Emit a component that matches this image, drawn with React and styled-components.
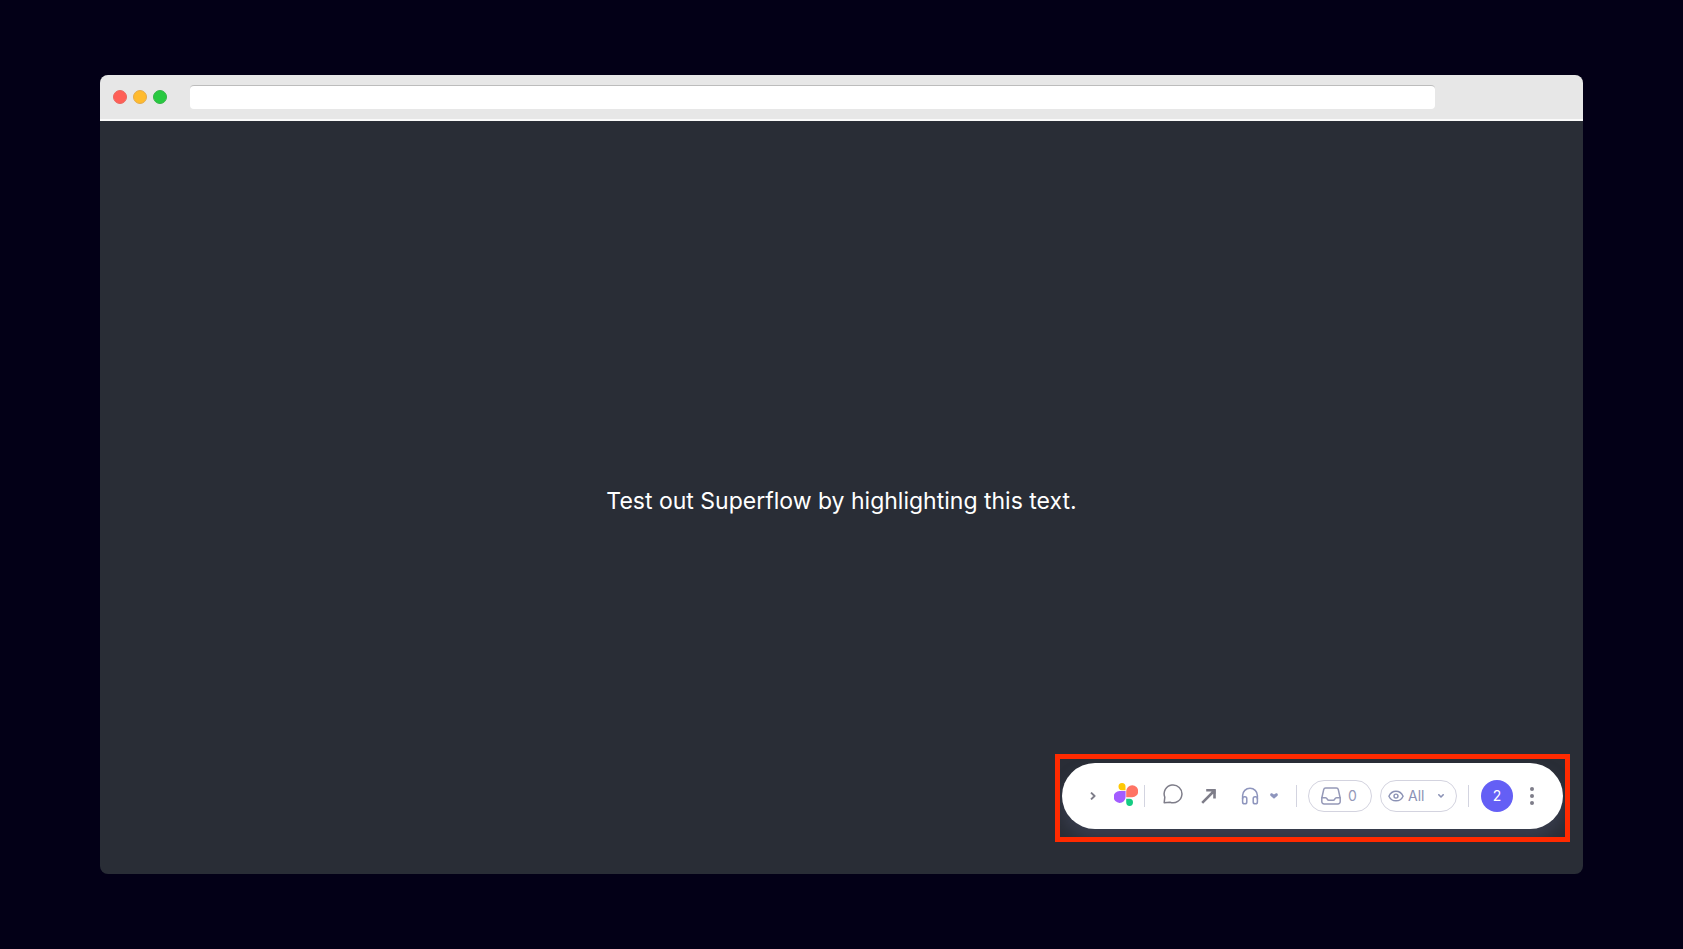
import React from "react";
import styled, { createGlobalStyle } from "styled-components";

const GlobalStyle = createGlobalStyle`
  *, *::before, *::after { box-sizing: border-box; }
  body { margin: 0; background: #030017; font-family: Inter, "Liberation Sans", sans-serif; }
  button, input, select { font: inherit; color: inherit; }
`;

const Page = styled.div`
  display: flex;
  min-height: 100vh;
  padding: 75px 100px;
`;

const BrowserWindow = styled.div`
  position: relative;
  display: flex;
  flex: 1;
  flex-direction: column;
  overflow: hidden;
  border-radius: 8px;
  background: #292d36;
`;

const TitleBar = styled.header`
  display: flex;
  align-items: center;
  height: 46px;
  padding: 0 148px 0 13px;
  border-bottom: 2px solid #fafafa;
  background: #e7e7e7;
`;

const TrafficLights = styled.div`
  display: flex;
  gap: 6px;
  margin-right: 23px;
`;

const Light = styled.button`
  width: 14px;
  height: 14px;
  padding: 0;
  border: 1px solid ${(p) => p.$edge};
  border-radius: 50%;
  background: ${(p) => p.$color};
`;

const AddressInput = styled.input`
  flex: 1;
  min-width: 0;
  height: 24px;
  padding: 0 8px;
  border: 0;
  border-top: 1px solid #bcbcbc;
  border-radius: 4px;
  outline: none;
  background: #fff;
  font-size: 14px;
`;

const Content = styled.main`
  display: flex;
  flex: 1;
  align-items: center;
  justify-content: center;
  padding-top: 6px;
`;

const Message = styled.p`
  margin: 0;
  color: #fff;
  font-size: 23px;
  line-height: 32px;
`;

const Highlight = styled.div`
  position: absolute;
  right: 13px;
  bottom: 32px;
  overflow: hidden;
  padding: 4px 2px 8px;
  border: 5px solid #ff2a00;
`;

const Toolbar = styled.div`
  display: flex;
  align-items: center;
  height: 66px;
  padding: 0 19px 0 20px;
  border-radius: 33px;
  background: #fff;
  box-shadow: 0 10px 16px rgba(86, 92, 124, 0.35);
  color: #8e90b4;
  font-size: 14px;
`;

const Group = styled.div`
  display: flex;
  align-items: center;
  gap: ${(p) => p.$gap || 0}px;
  margin-right: ${(p) => p.$after || 0}px;
`;

const Divider = styled.span`
  width: 1px;
  height: 22px;
  margin: 0 ${(p) => p.$after}px 0 ${(p) => p.$before}px;
  background: #d3d4e0;
`;

const IconButton = styled.button`
  display: flex;
  align-items: center;
  justify-content: center;
  width: ${(p) => (p.$wide ? 32 : 24)}px;
  height: 32px;
  padding: 0;
  border: 0;
  background: none;
  color: ${(p) => (p.$muted ? "#8e95bd" : "#7e7d89")};
  cursor: pointer;
`;

const InboxButton = styled.button`
  display: flex;
  align-items: center;
  gap: 7px;
  width: 64px;
  height: 32px;
  padding: 0 0 0 12px;
  border: 1px solid #d3d3df;
  border-radius: 16px;
  background: #fff;
  color: #9599b8;
  cursor: pointer;
`;

const Count = styled.span`
  padding-bottom: 2px;
`;

const FilterLabel = styled.label`
  display: grid;
  grid-template-columns: 16px 1fr;
  align-items: center;
  column-gap: 4px;
  width: 77px;
  height: 32px;
  padding: 0 12px 0 7px;
  border: 1px solid #d3d3df;
  border-radius: 16px;
  color: #8b92b5;
`;

const FilterField = styled.span`
  display: grid;
  align-items: center;

  > * { grid-area: 1 / 1; }
  > svg { justify-self: end; pointer-events: none; }
`;

const FilterSelect = styled.select`
  width: 100%;
  height: 24px;
  padding: 0 0 2px;
  border: 0;
  outline: none;
  appearance: none;
  background: none;
`;

const Avatar = styled.button`
  width: 32px;
  height: 32px;
  margin-right: 7px;
  padding: 0 0 2px;
  border: 0;
  border-radius: 50%;
  background: #645ff5;
  color: #fff;
  cursor: pointer;
`;

const stroke = { fill: "none", stroke: "currentColor", strokeLinecap: "round", strokeLinejoin: "round" };

const ChevronIcon = () => (
  <svg width="8" height="8" viewBox="0 0 8 8" {...stroke} strokeLinecap="butt" strokeWidth="1.9">
    <path d="M1 .6L4.600 4 1 7.400" />
  </svg>
);

const LogoIcon = () => (
  <svg width="24" height="26" viewBox="0 1 24 26" role="img" aria-label="Superflow">
    <path d="M11.500 8.200H8.300A3.500 3.600 0 1 1 11.500 4.700z" fill="#ffc905" />
    <path d="M12.200 15.300V9.200a6 6 0 1 1 6 6.100z" fill="#ff7464" />
    <path d="M11.600 8.900v6.100A6 6 0 1 1 5.600 8.900z" fill="#a35cff" />
    <path d="M12.200 16.700h3.400a3.400 3.600 0 1 1-3.400 3.600z" fill="#14cc82" />
  </svg>
);

const CommentIcon = () => (
  <svg width="20" height="24" viewBox="0 0 20 24" {...stroke} strokeWidth="1.500">
    <path d="M1.200 18.700L1.800 13.200A8.900 8.900 0 1 1 7 18.200z" />
  </svg>
);

const ArrowIcon = () => (
  <svg width="16" height="16" viewBox="0 0 16 16" fill="none" stroke="currentColor" strokeWidth="2.6">
    <path d="M1.200 14.800L13 3M5.200 2.300h8.300V10.600" />
    <path d="M10.500 2h4v4z" fill="currentColor" stroke="none" />
  </svg>
);

const HeadphonesIcon = () => (
  <svg width="18" height="18" viewBox="0 0 18 18" {...stroke} strokeWidth="1.5">
    <path d="M1.600 12V8.600a7.400 7.400 0 0 1 14.800 0V12" />
    <rect x="1.600" y="9.800" width="4.200" height="7" rx="1.900" />
    <rect x="12.200" y="9.800" width="4.200" height="7" rx="1.900" />
  </svg>
);

const SolidCaretIcon = () => (
  <svg width="8" height="6" viewBox="0 0 8 6" fill="currentColor">
    <path d="M4 5.800L.5 2.800C-.6 1.300 1-.5 2.400.6L4 1.600 5.600.6C7-.5 8.600 1.300 7.500 2.800z" />
  </svg>
);

const InboxIcon = () => (
  <svg width="20" height="18" viewBox="0 0 20 18" {...stroke} strokeWidth="1.5">
    <path d="M4.700 1h10.600a2 2 0 0 1 2 1.600L19.200 11v3.600a2.300 2.300 0 0 1-2.300 2.400H3.100A2.300 2.300 0 0 1 .8 14.600V11L2.700 2.600A2 2 0 0 1 4.700 1z" />
    <path d="M.9 10.800h3.500c1.400 0 1.600.8 2 1.600.3.600.7.900 1.300.9h4.600c.6 0 1-.3 1.300-.9.4-.8.6-1.600 2-1.600h3.500" />
  </svg>
);

const EyeIcon = () => (
  <svg width="16" height="12" viewBox="0 0 16 12" {...stroke} strokeWidth="1.400">
    <path d="M.9 6.200C2.300 3.100 4.800 1.200 8 1.200s5.700 1.900 7.100 5c-1.400 3-3.900 4.600-7.100 4.600S2.300 9.200.9 6.200z" />
    <circle cx="8" cy="6.100" r="2" />
  </svg>
);

const SmallCaretIcon = () => (
  <svg width="6" height="4" viewBox="0 0 6 4" {...stroke} strokeWidth="1.600">
    <path d="M.8.8L3 3 5.200.8" />
  </svg>
);

const MoreIcon = () => (
  <svg width="4" height="18" viewBox="0 0 4 18" fill="currentColor">
    <circle cx="2" cy="2" r="2" />
    <circle cx="2" cy="9" r="2" />
    <circle cx="2" cy="16" r="2" />
  </svg>
);

export default function App() {
  return (
    <>
      <GlobalStyle />
      <Page>
        <BrowserWindow>
          <TitleBar>
            <TrafficLights>
              <Light aria-label="Close" $color="#ff5f57" $edge="#e9675f" />
              <Light aria-label="Minimize" $color="#ffbb2e" $edge="#e3ab4c" />
              <Light aria-label="Maximize" $color="#28c940" $edge="#34b447" />
            </TrafficLights>
            <AddressInput type="text" aria-label="Address" />
          </TitleBar>
          <Content>
            <Message>Test out Superflow by highlighting this text.</Message>
          </Content>
          <Highlight>
            <Toolbar role="toolbar" aria-label="Superflow">
              <Group $gap={8}>
                <IconButton aria-label="Collapse"><ChevronIcon /></IconButton>
                <LogoIcon />
              </Group>
              <Divider $before={6} $after={12} />
              <Group $gap={4} $after={13}>
                <IconButton $wide aria-label="Comment"><CommentIcon /></IconButton>
                <IconButton $wide aria-label="Draw arrow"><ArrowIcon /></IconButton>
              </Group>
              <Group>
                <IconButton $muted aria-label="Audio"><HeadphonesIcon /></IconButton>
                <IconButton $muted aria-label="Audio options"><SolidCaretIcon /></IconButton>
              </Group>
              <Divider $before={10} $after={11} />
              <Group $gap={8}>
                <InboxButton aria-label="Inbox, 0 items"><InboxIcon /><Count>0</Count></InboxButton>
                <FilterLabel>
                  <EyeIcon />
                  <FilterField>
                    <FilterSelect aria-label="Visible comments" defaultValue="All">
                      <option>All</option>
                    </FilterSelect>
                    <SmallCaretIcon />
                  </FilterField>
                </FilterLabel>
              </Group>
              <Divider $before={11} $after={12} />
              <Avatar aria-label="2 people">2</Avatar>
              <IconButton aria-label="More"><MoreIcon /></IconButton>
            </Toolbar>
          </Highlight>
        </BrowserWindow>
      </Page>
    </>
  );
}
